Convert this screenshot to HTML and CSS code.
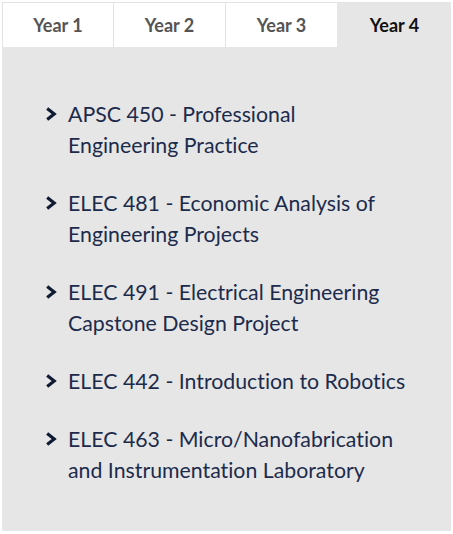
FILE: index.html
```html
<!DOCTYPE html>
<html lang="en">
<head>
    <meta charset="UTF-8">
    <meta name="viewport" content="width=device-width, initial-scale=1.0">
    <title>Year 4 Courses</title>
    <link rel="stylesheet" href="styles.css">
</head>
<body>
    <div class="tabs">
        <div class="tab-bar">
            <button class="tab">Year 1</button>
            <button class="tab">Year 2</button>
            <button class="tab">Year 3</button>
            <button class="tab active">Year 4</button>
        </div>
        <div class="tab-panel">
            <ul class="courses">
                <li><span class="chev"><svg viewBox="0 0 12 16" width="12" height="16"><path d="M2.2 2.5 L9.2 8 L2.2 13.5" fill="none" stroke="currentColor" stroke-width="3.2"/></svg></span><span>APSC 450 - Professional Engineering Practice</span></li>
                <li><span class="chev"><svg viewBox="0 0 12 16" width="12" height="16"><path d="M2.2 2.5 L9.2 8 L2.2 13.5" fill="none" stroke="currentColor" stroke-width="3.2"/></svg></span><span>ELEC 481 - Economic Analysis of Engineering Projects</span></li>
                <li><span class="chev"><svg viewBox="0 0 12 16" width="12" height="16"><path d="M2.2 2.5 L9.2 8 L2.2 13.5" fill="none" stroke="currentColor" stroke-width="3.2"/></svg></span><span>ELEC 491 - Electrical Engineering Capstone Design Project</span></li>
                <li><span class="chev"><svg viewBox="0 0 12 16" width="12" height="16"><path d="M2.2 2.5 L9.2 8 L2.2 13.5" fill="none" stroke="currentColor" stroke-width="3.2"/></svg></span><span>ELEC 442 - Introduction to Robotics</span></li>
                <li><span class="chev"><svg viewBox="0 0 12 16" width="12" height="16"><path d="M2.2 2.5 L9.2 8 L2.2 13.5" fill="none" stroke="currentColor" stroke-width="3.2"/></svg></span><span>ELEC 463 - Micro/Nanofabrication and Instrumentation Laboratory</span></li>
            </ul>
        </div>
    </div>
</body>
</html>
```

FILE: styles.css
```css
body { margin: 2px; background: #fff; font-family: Lato, "Open Sans", sans-serif; }
.tabs { width: 449px; }
.tab-bar { display: grid; grid-template-columns: 111px 112px 112px 114px; border-top: 1px solid #e1e4e6; }
.tab { height: 44px; padding: 0; border: none; border-left: 1px solid #e1e4e6; background: #fff; font-family: Lato, sans-serif; font-size: 18px; font-weight: 700; color: #545454; }
.tab.active { background: #e6e6e6; color: #111; border-left-color: #e6e6e6; }
.tab-panel { background: #e6e6e6; height: 484px; padding: 52px 20px 0 43px; box-sizing: border-box; }
.courses { list-style: none; margin: 0; padding: 0; width: 363px; }
.courses li { display: flex; gap: 11px; font-size: 21.3px; line-height: 31px; color: #1c2b4c; margin-bottom: 27px; font-variant-ligatures: none; }
.chev { display: flex; align-items: center; height: 29px; color: #0f1b33; flex-shrink: 0; }
.chev svg { display: block; }
```
